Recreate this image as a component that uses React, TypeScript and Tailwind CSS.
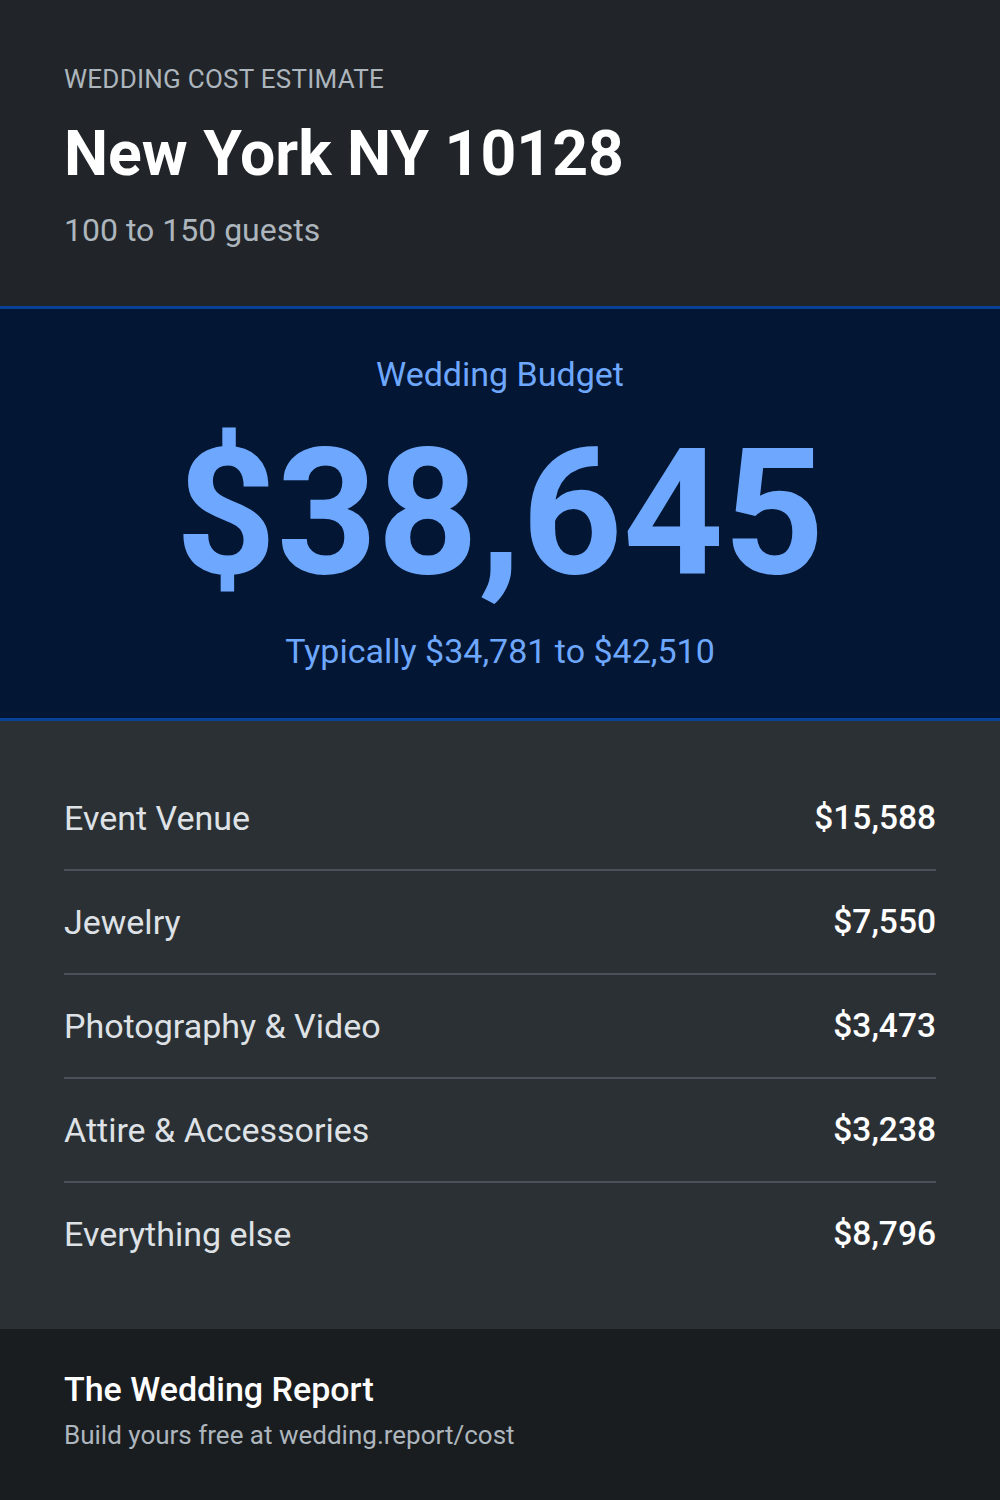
const items = [
  { label: 'Event Venue', value: '$15,588' },
  { label: 'Jewelry', value: '$7,550' },
  { label: 'Photography & Video', value: '$3,473' },
  { label: 'Attire & Accessories', value: '$3,238' },
  { label: 'Everything else', value: '$8,796' },
];

export default function App() {
  return (
    <div className="flex min-h-[1500px] w-[1000px] flex-col bg-[#212529] font-['Roboto',sans-serif]">
      <header className="px-16 pt-16 pb-14">
        <div className="text-[26px] leading-[1.2] tracking-[0.25px] text-[#adb5bd]">WEDDING COST ESTIMATE</div>
        <h1 className="mt-[21px] text-[62.5px] leading-[75px] font-bold text-white">New York NY 10128</h1>
        <div className="mt-5 text-[32px] leading-[1.2] text-[#adb5bd]">100 to 150 guests</div>
      </header>

      <section className="border-y-[3px] border-[#084298] bg-[#031633] pt-[45px] pb-[46px] text-center text-[#6ea8fe]">
        <div className="text-[34px] leading-[1.2]">Wedding Budget</div>
        <div className="mt-[31px] text-[176px] leading-none font-bold">$38,645</div>
        <div className="mt-[30px] text-[34px] leading-[1.2]">Typically $34,781 to $42,510</div>
      </section>

      <section className="bg-[#2b3035] px-16 pt-[46px] pb-[44px]">
        {items.map((item, i) => (
          <div
            key={item.label}
            className={`flex items-center justify-between text-[34px] ${
              i < items.length - 1 ? 'h-[104px] border-b-2 border-[#495057]' : 'h-[102px]'
            }`}
          >
            <span className="text-[#dee2e6]">{item.label}</span>
            <span className="text-[33.5px] font-medium text-white">{item.value}</span>
          </div>
        ))}
      </section>

      <footer className="flex-1 bg-[#1a1d20] px-16 pt-10 pb-12">
        <div className="text-[34px] leading-[1.2] font-medium text-white">The Wedding Report</div>
        <div className="mt-2.5 text-[26px] leading-[1.2] text-[#adb5bd]">Build yours free at wedding.report/cost</div>
      </footer>
    </div>
  );
}
